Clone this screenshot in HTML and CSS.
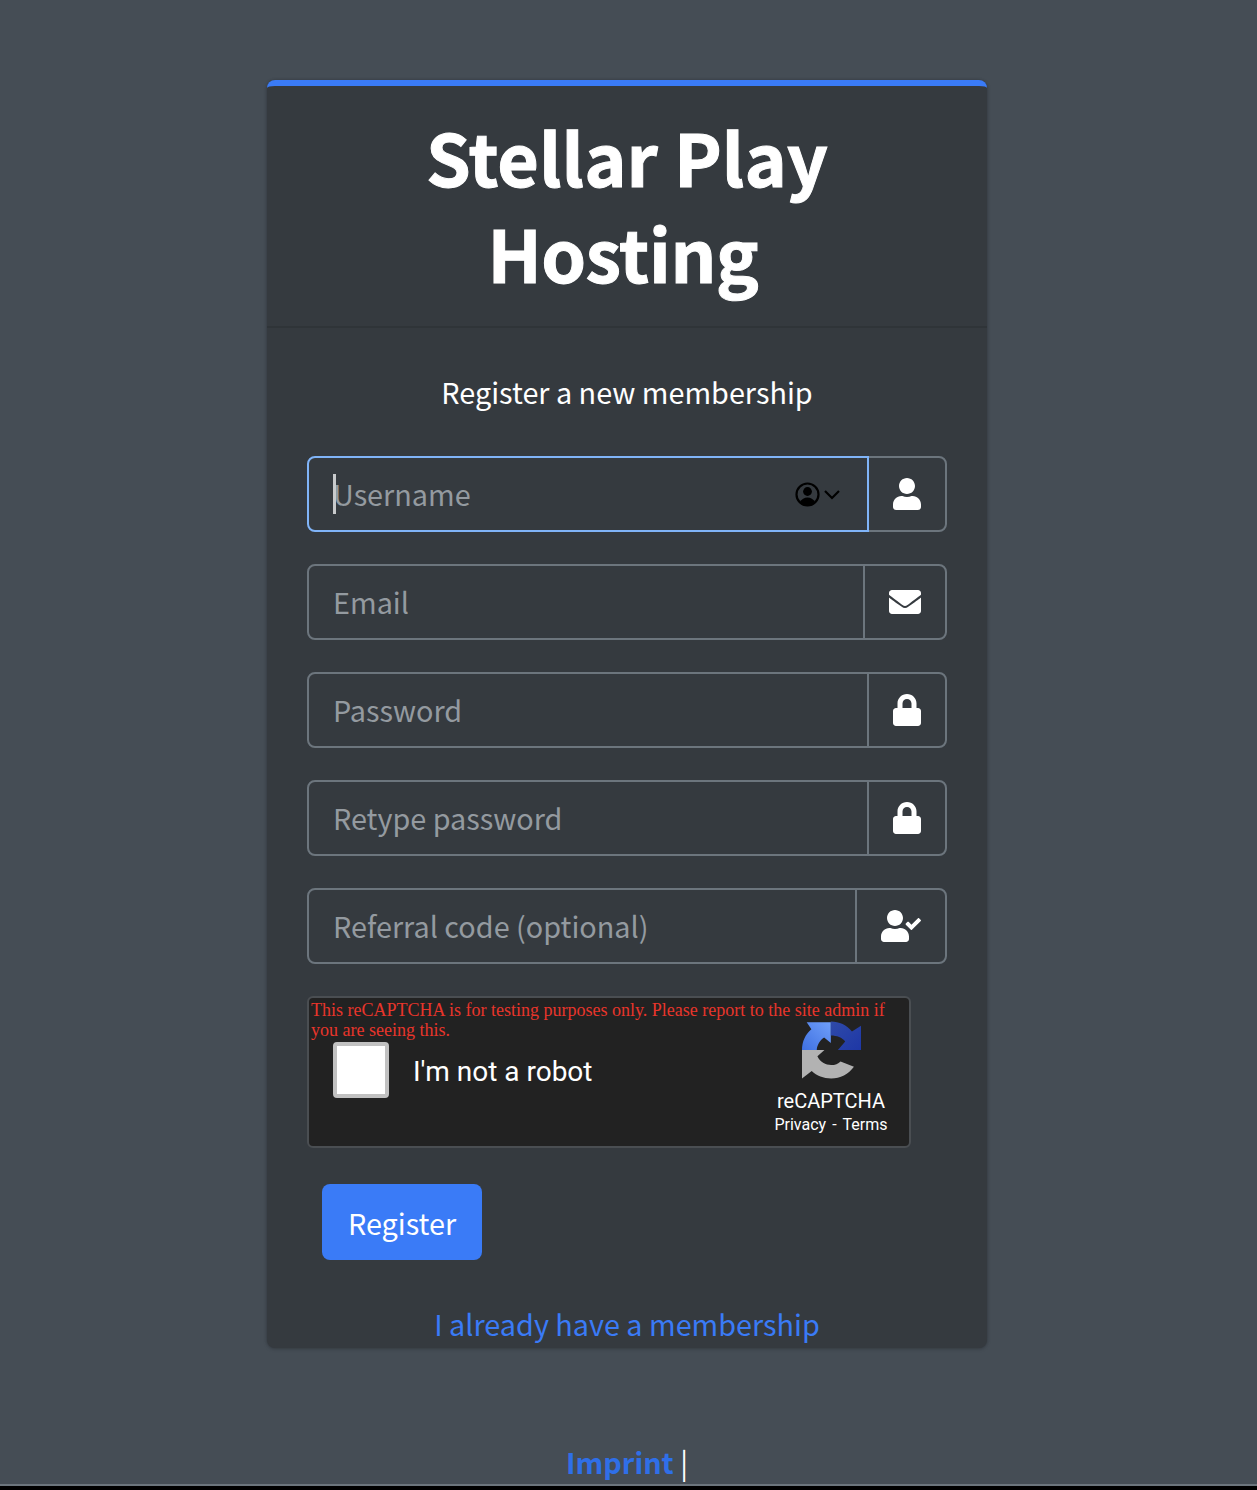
FILE: index.html
```html
<!DOCTYPE html>
<html lang="en">
<head>
<meta charset="utf-8">
<title>Stellar Play Hosting</title>
<link rel="stylesheet" href="styles.css">
</head>
<body>
<main class="card">
  <header class="card-header"><h1 class="brand">Stellar Play <span class="brand-second">Hosting</span></h1></header>
  <div class="card-body">
    <p class="intro">Register a new membership</p>
    <form class="form">
      <div class="group">
        <div class="field field-focus">
          <span class="caret"></span>
          <input class="input" type="text" placeholder="Username">
          <svg class="autofill" viewBox="0 0 45 25" aria-hidden="true">
            <circle cx="12.5" cy="12.5" r="11" fill="none" stroke="#000" stroke-width="2.2"/>
            <circle cx="12.5" cy="9.5" r="4.4" fill="#000"/>
            <path d="M4.5 20.5c2-3.6 5-5 8-5s6 1.4 8 5a11 11 0 0 1-16 0z" fill="#000"/>
            <path d="M30 9l7 7 7-7" fill="none" stroke="#000" stroke-width="2.2"/>
          </svg>
        </div>
        <div class="addon"><svg class="icon icon-user" viewBox="0 0 448 512" aria-hidden="true"><path d="M224 256c70.7 0 128-57.3 128-128S294.7 0 224 0 96 57.3 96 128s57.3 128 128 128zm89.6 32h-16.7c-22.2 10.2-46.9 16-72.9 16s-50.6-5.8-72.9-16h-16.7C60.2 288 0 348.2 0 422.4V464c0 26.5 21.5 48 48 48h352c26.5 0 48-21.5 48-48v-41.6c0-74.2-60.2-134.4-134.4-134.4z"/></svg></div>
      </div>
      <div class="group">
        <div class="field"><input class="input" type="text" placeholder="Email"></div>
        <div class="addon"><svg class="icon icon-mail" viewBox="0 0 512 512" aria-hidden="true"><path d="M502.3 190.8c3.9-3.1 9.7-.2 9.7 4.7V400c0 26.5-21.5 48-48 48H48c-26.5 0-48-21.5-48-48V195.6c0-5 5.7-7.8 9.7-4.7 22.4 17.4 52.1 39.5 154.1 113.6 21.1 15.4 56.7 47.8 92.2 47.6 35.7.3 72-32.8 92.3-47.6 102-74.1 131.6-96.3 154-113.7zM256 320c23.2.4 56.6-29.2 73.4-41.4 132.7-96.3 142.8-104.7 173.4-128.7 5.8-4.5 9.2-11.5 9.2-18.9v-19c0-26.5-21.5-48-48-48H48C21.5 64 0 85.5 0 112v19c0 7.4 3.4 14.3 9.2 18.9 30.6 23.9 40.7 32.4 173.4 128.7 16.8 12.2 50.2 41.8 73.4 41.4z"/></svg></div>
      </div>
      <div class="group">
        <div class="field"><input class="input" type="password" placeholder="Password"></div>
        <div class="addon"><svg class="icon icon-user" viewBox="0 0 448 512" aria-hidden="true"><path d="M400 224h-24v-72C376 68.2 307.8 0 224 0S72 68.2 72 152v72H48c-26.5 0-48 21.5-48 48v192c0 26.5 21.5 48 48 48h352c26.5 0 48-21.5 48-48V272c0-26.5-21.5-48-48-48zm-104 0H152v-72c0-39.7 32.3-72 72-72s72 32.3 72 72v72z"/></svg></div>
      </div>
      <div class="group">
        <div class="field"><input class="input" type="password" placeholder="Retype password"></div>
        <div class="addon"><svg class="icon icon-user" viewBox="0 0 448 512" aria-hidden="true"><path d="M400 224h-24v-72C376 68.2 307.8 0 224 0S72 68.2 72 152v72H48c-26.5 0-48 21.5-48 48v192c0 26.5 21.5 48 48 48h352c26.5 0 48-21.5 48-48V272c0-26.5-21.5-48-48-48zm-104 0H152v-72c0-39.7 32.3-72 72-72s72 32.3 72 72v72z"/></svg></div>
      </div>
      <div class="group">
        <div class="field"><input class="input" type="text" placeholder="Referral code (optional)"></div>
        <div class="addon"><svg class="icon icon-check" viewBox="0 0 640 512" aria-hidden="true"><path d="M224 256c70.7 0 128-57.3 128-128S294.7 0 224 0 96 57.3 96 128s57.3 128 128 128zm89.6 32h-16.7c-22.2 10.2-46.9 16-72.9 16s-50.6-5.8-72.9-16h-16.7C60.2 288 0 348.2 0 422.4V464c0 26.5 21.5 48 48 48h352c26.5 0 48-21.5 48-48v-41.6c0-74.2-60.2-134.4-134.4-134.4zm323-128.4l-27.8-28.1c-4.6-4.7-12.1-4.7-16.8-.1l-104.8 104-45.5-45.8c-4.6-4.7-12.1-4.7-16.8-.1l-28.1 27.9c-4.7 4.6-4.7 12.1-.1 16.8l81.7 82.3c4.6 4.7 12.1 4.7 16.8.1l141.3-140.2c4.6-4.7 4.7-12.2.1-16.8z"/></svg></div>
      </div>
      <div class="captcha">
        <p class="captcha-warning">This reCAPTCHA is for testing purposes only. Please report to the site admin if you are seeing this.</p>
        <div class="captcha-row">
          <div class="captcha-check">
            <span class="checkbox"></span>
            <span class="robot">I'm not a robot</span>
          </div>
          <div class="captcha-brand">
            <svg class="captcha-logo" viewBox="21 20 176 170" aria-hidden="true">
              <defs>
                <linearGradient id="blueGrad" x1="0" y1="1" x2="1" y2="0"><stop offset="0" stop-color="#3f70e0"/><stop offset="1" stop-color="#6f9ffa"/></linearGradient>
                <linearGradient id="navyGrad" x1="0" y1="0" x2="1" y2="1"><stop offset="0" stop-color="#2f4aa8"/><stop offset="1" stop-color="#1e37a6"/></linearGradient>
              </defs>
              <path fill="url(#blueGrad)" d="M21 105C21 80 31 58 49 43L35 22H107V84L87 68C75 76 66 90 65 105Z"/>
              <path fill="url(#navyGrad)" d="M107 20C132 20 155 30 170 50L197 33V105H128L150 80C141 68 125 62 107 62Z"/>
              <path fill="#b2b2b2" d="M21 105H88L67 124C74 141 92 150 108 150C120 150 129 146 136 139L176 155C160 177 135 190 108 190C85 190 65 182 50 168L21 190Z"/>
            </svg>
            <span class="captcha-name">reCAPTCHA</span>
            <span class="captcha-links">Privacy - Terms</span>
          </div>
        </div>
      </div>
      <button class="btn" type="button">Register</button>
    </form>
    <a class="link-login" href="#">I already have a membership</a>
  </div>
</main>
<footer class="footer"><a class="imprint" href="#">Imprint</a> <span class="sep">|</span></footer>
<div class="edge"></div>
</body>
</html>
```
FILE: styles.css
```css
* { box-sizing: border-box; }
html, body { margin: 0; height: 1490px; overflow: hidden; }
body {
  display: flex;
  flex-direction: column;
  align-items: center;
  padding-right: 3px;
  background: #454d55;
  color: #fff;
  font-family: "Noto Sans CJK SC", "Noto Sans", sans-serif;
  font-size: 28.8px;
}
.card {
  flex: none;
  width: 720px;
  margin-top: 80px;
  height: 1268px;
  background: #353a3f;
  border-top: 6px solid #3a7bf7;
  border-radius: 8px;
  box-shadow: 0 0 3px rgba(0,0,0,.2), 0 1px 4px rgba(0,0,0,.15);
}
.card-header {
  height: 242px;
  padding: 22px 100px 0;
  border-bottom: 2px solid #2f3438;
}
.brand {
  margin: 0;
  font-size: 71.7px;
  line-height: 96px;
  font-weight: 700;
  text-align: center;
  -webkit-text-stroke: 1px #fff;
}
.brand-second { display: block; padding-right: 8px; letter-spacing: -.3px; }
.card-body { padding: 40px 40px 0; }
.intro {
  margin: 0 0 40px;
  line-height: 48px;
  text-align: center;
}
.form { display: flex; flex-direction: column; align-items: flex-start; }
.group { display: flex; width: 640px; height: 76px; margin-bottom: 32px; }
.field {
  position: relative;
  flex: 1;
  display: flex;
  align-items: center;
  border: 2px solid #6c757d;
  border-radius: 8px 0 0 8px;
}
.field-focus { border-color: #80b4f8; z-index: 1; }
.input {
  flex: 1;
  min-width: 0;
  height: 100%;
  padding: 0 24px 2px;
  border: 0;
  outline: 0;
  background: transparent;
  color: #fff;
  font: inherit;
}
.input::placeholder { color: #949aa0; opacity: 1; }
.caret {
  position: absolute;
  left: 24px;
  top: 16px;
  width: 3px;
  height: 40px;
  background: #c8cacc;
}
.autofill { width: 45px; height: 25px; margin-right: 27px; flex: none; }
.addon {
  display: flex;
  align-items: center;
  margin-left: -2px;
  padding: 0 24px;
  border: 2px solid #6c757d;
  border-radius: 0 8px 8px 0;
}
.icon { display: block; height: 32px; fill: #fff; }
.icon-user { width: 28px; }
.icon-mail { width: 32px; }
.icon-check { width: 40px; }
.captcha {
  display: grid;
  width: 604px;
  height: 152px;
  background: #222;
  border: 2px solid #4a4e52;
  border-radius: 6px;
  font-family: "Liberation Serif", serif;
}
.captcha-warning, .captcha-row { grid-area: 1 / 1; }
.captcha-warning {
  margin: 0;
  padding: 2px 2px 0;
  color: #e8352b;
  font-size: 18px;
  line-height: 20px;
}
.captcha-row {
  display: flex;
  justify-content: space-between;
  padding: 23px 8px 0 24px;
  font-family: Roboto, sans-serif;
}
.captcha-check { display: flex; align-items: center; gap: 24px; height: 56px; margin-top: 21px; }
.checkbox {
  width: 56px;
  height: 56px;
  background: #fff;
  border: 4px solid #c1c1c1;
  border-radius: 4px;
}
.robot { font-size: 28px; padding-top: 2px; }
.captcha-brand { display: flex; flex-direction: column; align-items: center; width: 140px; }
.captcha-logo { width: 59px; height: 58px; }
.captcha-name { margin-top: 10px; font-size: 20px; line-height: 24px; }
.captcha-links { font-size: 16px; line-height: 24px; word-spacing: 2.2px; }
.btn {
  width: 160px;
  height: 76px;
  margin: 36px 0 0 15px;
  padding: 0;
  border: 0;
  border-radius: 8px;
  background: #3a7bf7;
  color: #fff;
  font: inherit;
}
.link-login {
  display: block;
  margin-top: 40px;
  line-height: 48px;
  text-align: center;
  color: #3a7bf7;
  text-decoration: none;
}
.footer { flex: none; margin-top: 92px; line-height: 44px; }
.imprint { color: #2f6fe8; font-weight: 700; text-decoration: none; }
.sep { color: #fff; }
.edge {
  flex: none;
  align-self: stretch;
  height: 6px;
  margin-top: auto;
  margin-right: -3px;
  background: #000;
  border-top: 2px solid #6c757d;
}
```
